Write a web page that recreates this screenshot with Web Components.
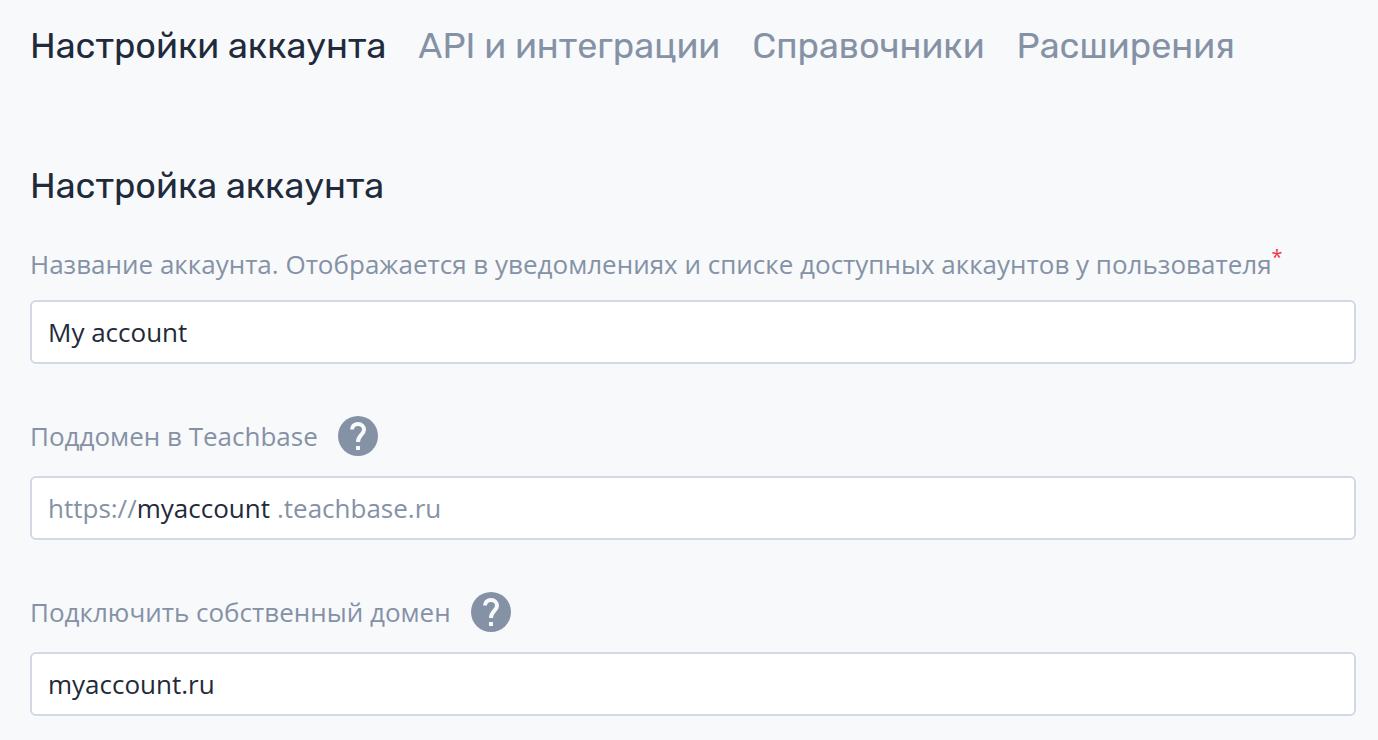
<!DOCTYPE html>
<html lang="ru">
<head>
<meta charset="utf-8">
<title>Настройки аккаунта</title>
<style>
body { margin: 0; background: #f8f9fb; color: #1f2a3b; font-family: "Open Sans", "Noto Sans", sans-serif; font-size: 26px; line-height: 32px; }
</style>
</head>
<body>
<account-settings></account-settings>
<script>
class NavTab extends HTMLElement {
  constructor() {
    super();
    this.attachShadow({ mode: "open" }).innerHTML = `
      <style>
        :host { display: block; }
        a { color: #8592a6; text-decoration: none; }
        :host([active]) a { color: #1f2a3b; }
      </style>
      <a href="#"><slot></slot></a>`;
    if (this.hasAttribute("active")) this.shadowRoot.querySelector("a").setAttribute("aria-current", "page");
  }
}
customElements.define("nav-tab", NavTab);

class HelpButton extends HTMLElement {
  constructor() {
    super();
    this.attachShadow({ mode: "open" }).innerHTML = `
      <style>
        :host { display: block; height: 40px; }
        button { display: block; width: 40px; height: 40px; padding: 0; border: 0; background: none; cursor: pointer; }
        svg { display: block; }
      </style>
      <button type="button" aria-label="Справка">
        <svg width="40" height="40" viewBox="0 0 40 40" fill="none" aria-hidden="true">
          <circle cx="20" cy="20" r="20" fill="#8592a6"/>
          <path d="M14 13.5C14 10 16.5 8 20 8s6 2.400 6 5.700C26 18.500 20 19 20 26" stroke="#f8f9fb" stroke-width="4"/>
          <path d="M18 30h4v4h-4z" fill="#f8f9fb"/>
        </svg>
      </button>`;
  }
}
customElements.define("help-button", HelpButton);

class TextField extends HTMLElement {
  constructor() {
    super();
    this.attachShadow({ mode: "open" }).innerHTML = `
      <style>
        :host { display: block; }
        .caption { display: flex; align-items: center; gap: 20px; margin-bottom: 20px; color: #8592a6; }
        .star { display: none; color: #f23545; font-size: 20px; line-height: 0; vertical-align: 10px; }
        :host([required]) .star { display: inline; }
        .box { display: flex; align-items: center; box-sizing: border-box; height: 64px; padding: 0 16px; background: #fff; border: 2px solid #d2d9e5; border-radius: 6px; color: #8592a6; }
        .box:focus-within { border-color: #8592a6; }
        input { flex: 1; min-width: 0; padding: 0; border: 0; outline: 0; background: none; color: #1f2a3b; font: inherit; height: 36px; }
        :host([suffix]) input { flex: none; field-sizing: content; margin-right: 7px; }
      </style>
      <div class="caption"><label for="value"><slot></slot><span class="star">*</span></label><slot name="help"></slot></div>
      <div class="box"><span class="prefix"></span><input id="value" type="text"><span class="suffix"></span></div>`;
    const $ = s => this.shadowRoot.querySelector(s);
    $("input").value = this.getAttribute("value") || "";
    $("input").required = this.hasAttribute("required");
    $(".prefix").textContent = this.getAttribute("prefix") || "";
    $(".suffix").textContent = this.getAttribute("suffix") || "";
  }
}
customElements.define("text-field", TextField);

class AccountSettings extends HTMLElement {
  constructor() {
    super();
    this.attachShadow({ mode: "open" }).innerHTML = `
      <style>
        :host { display: block; padding: 24px 22px 24px 30px; }
        nav { display: flex; gap: 32px; }
        nav, h1 { font-family: Rubik, Roboto, sans-serif; font-size: 36px; line-height: 44px; font-weight: 400; }
        h1 { margin: 96px 0 40px; }
        form { display: flex; flex-direction: column; gap: 52px; }
      </style>
      <nav>
        <nav-tab active>Настройки аккаунта</nav-tab>
        <nav-tab>API и интеграции</nav-tab>
        <nav-tab>Справочники</nav-tab>
        <nav-tab>Расширения</nav-tab>
      </nav>
      <main>
        <h1>Настройка аккаунта</h1>
        <form>
          <text-field required value="My account">Название аккаунта. Отображается в уведомлениях и списке доступных аккаунтов у пользователя</text-field>
          <text-field prefix="https://" value="myaccount" suffix=".teachbase.ru">Поддомен в Teachbase<help-button slot="help"></help-button></text-field>
          <text-field value="myaccount.ru">Подключить собственный домен<help-button slot="help"></help-button></text-field>
        </form>
      </main>`;
  }
}
customElements.define("account-settings", AccountSettings);
</script>
</body>
</html>
